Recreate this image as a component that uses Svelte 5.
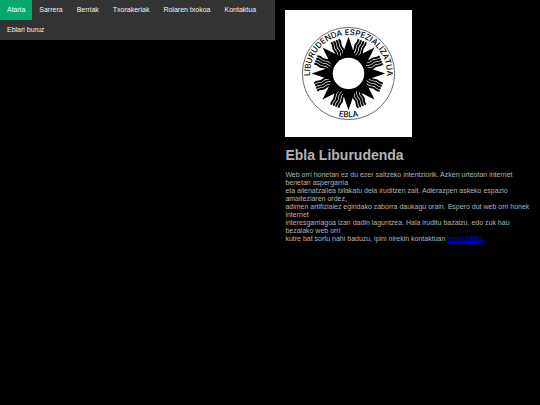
<script lang="ts">
    const links = [
        "Ataria",
        "Sarrera",
        "Berriak",
        "Txorakeriak",
        "Rolaren txokoa",
        "Kontaktua",
        "Eblari buruz",
    ];

    let current = $state("Ataria");

    const rays = [0, 45, 90, 135, 180, 225, 270, 315];
    const strands = [-12, -4, 4, 12];

    // Wavy strand running outwards from the sun
    const strand = (x: number) =>
        `M${x} -50 q-3 -7 0 -14 t0 -14 t0 -14 t0 -14`;
</script>

<div class="page">
    <nav>
        {#each links as link}
            <a
                href="#{link.toLowerCase().replace(' ', '-')}"
                class:active={current === link}
                onclick={() => (current = link)}>{link}</a
            >
        {/each}
    </nav>

    <main>
        <svg class="logo" viewBox="0 0 380 380" role="img" aria-label="Ebla">
            <defs>
                <path id="arc-top" d="M190 305 A115 115 0 0 1 190 75 A115 115 0 0 1 190 305" />
                <path id="arc-bottom" d="M59 190 A131 131 0 0 0 321 190" />
            </defs>
            <rect width="380" height="380" fill="#fff" />
            <circle cx="190" cy="190" r="138" fill="none" stroke="#222" stroke-width="2" />
            <g transform="translate(190 190)">
                {#each rays as angle}
                    <g transform="rotate({angle})">
                        <path d="M0 -110 L21 -48 H-21 Z" />
                        <g transform="rotate(22.5)" fill="none" stroke="#000" stroke-width="6">
                            {#each strands as x}
                                <path d={strand(x)} />
                            {/each}
                        </g>
                    </g>
                {/each}
                <circle r="58" />
                <circle r="47" fill="#fff" />
            </g>
            <text class="ring" text-anchor="middle">
                <textPath href="#arc-top" startOffset="50%">LIBURUDENDA ESPEZIALIZATUA</textPath>
            </text>
            <text class="ring" text-anchor="middle">
                <textPath href="#arc-bottom" startOffset="50%">EBLA</textPath>
            </text>
        </svg>

        <h1>Ebla Liburudenda</h1>

        <p>
            Web orri honetan ez du ezer saltzeko intentziorik. Azken urteotan internet benetan aspergarria<br />
            eta alienatzailea bilakatu dela iruditzen zait. Adierazpen askeko espazio amaiteziaren ordez,<br />
            adimen artifizialez egindako zaborra daukagu orain. Espero dut web orri honek internet<br />
            interesgarriagoa izan dadin laguntzea. Hala iruditu bazaizu, edo zuk hau bezalako web orri<br />
            kutre bat sortu nahi baduzu, ipini nirekin kontaktuan <a href="#email">email bidez.</a>
        </p>
    </main>
</div>

<style>
    :global(body) {
        margin: 0;
        background: #000;
    }

    .page {
        display: grid;
        grid-template-columns: 51% 1fr;
        align-items: start;
        font-family: "Liberation Sans", Arial, Helvetica, sans-serif;
        font-size: 7px;
        color: #b3b3b3;
    }

    nav {
        display: flex;
        flex-wrap: wrap;
        background: #333;
    }

    nav a {
        padding: 6px 7px;
        line-height: 8px;
        color: #f2f2f2;
        text-decoration: none;
    }

    nav a:hover {
        background: #555;
    }

    nav a.active {
        background: #04aa6d;
        color: #fff;
    }

    main {
        padding: 10px 8px 10px 10px;
    }

    .logo {
        display: block;
        width: 127px;
        max-width: 100%;
    }

    .ring {
        font-family: Inter, "Liberation Sans", sans-serif;
        font-size: 24px;
        font-weight: 500;
    }

    h1 {
        margin: 10px 0 8px;
        font-size: 14px;
        line-height: 16px;
    }

    p {
        margin: 0;
        line-height: 8px;
    }

    p a {
        color: #0000ee;
    }
</style>
